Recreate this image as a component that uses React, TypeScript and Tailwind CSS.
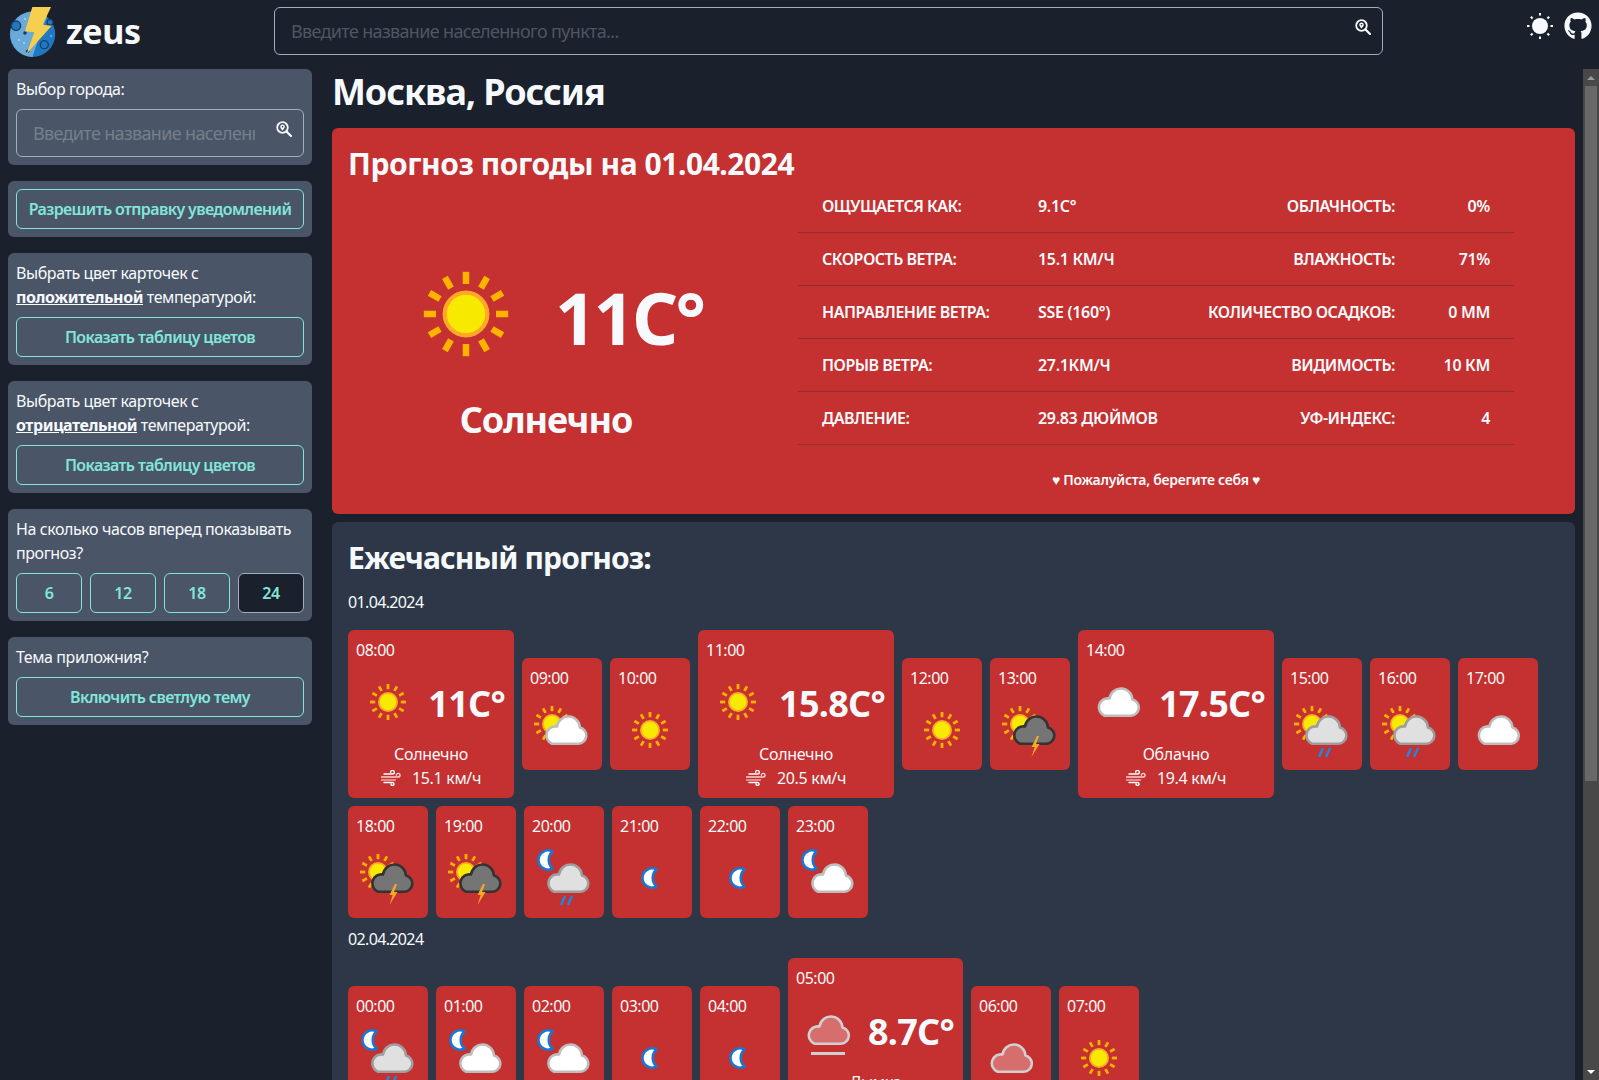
import React from 'react';
import { FaGithub } from 'react-icons/fa';

type IconKind =
  | 'sun'
  | 'cloud'
  | 'partly'
  | 'partlyRain'
  | 'partlyStorm'
  | 'moon'
  | 'moonCloud'
  | 'moonRain'
  | 'pinkCloud'
  | 'fog';

interface Hour {
  time: string;
  icon: IconKind;
  temp?: string;
  text?: string;
  wind?: string;
  width?: string;
}

const CLOUD_PATH = 'M9 28.7H35.5a8.2 8.2 0 0 0 1.4-16.2A11.5 11.5 0 0 0 14 11.5A9 9 0 0 0 9 28.7Z';

function Cloud({ x = 13, fill = '#fff', stroke = '#bdbdbd', fillOpacity = 1 }: { x?: number; fill?: string; stroke?: string; fillOpacity?: number }) {
  return (
    <g transform={`translate(${x} 17)`}>
      <path d={CLOUD_PATH} fill={fill} fillOpacity={fillOpacity} stroke={stroke} strokeWidth="2.6" strokeLinejoin="round" />
    </g>
  );
}

function Sun({ cx = 32, cy = 32 }: { cx?: number; cy?: number }) {
  return (
    <g>
      {[0, 30, 60, 90, 120, 150, 180, 210, 240, 270, 300, 330].map((a) => (
        <rect key={a} x={cx - 1.4} y={cy - 18} width="2.8" height="5.2" fill="#ffb300" transform={`rotate(${a} ${cx} ${cy})`} />
      ))}
      <circle cx={cx} cy={cy} r="10" fill="#ffa726" />
      <circle cx={cx} cy={cy} r="8.2" fill="#f7ea00" />
    </g>
  );
}

function Moon({ dx = 0, dy = 0 }: { dx?: number; dy?: number }) {
  return (
    <path
      transform={`translate(${dx} ${dy})`}
      d="M36.5 23.5A9.6 9.6 0 1 0 36.5 40.5A11.5 11.5 0 0 1 36.5 23.5Z"
      fill="#fff"
      stroke="#1976d2"
      strokeWidth="2.6"
      strokeLinejoin="round"
    />
  );
}

function Rain() {
  return (
    <g stroke="#1e88e5" strokeWidth="2.4">
      <path d="M33 50l-4 9" />
      <path d="M40 50l-4 9" />
    </g>
  );
}

function WeatherIcon({ kind, className = 'h-16 w-16 shrink-0' }: { kind: IconKind; className?: string }) {
  return (
    <svg viewBox="0 0 64 64" className={className}>
      {kind === 'sun' && <Sun />}
      {kind === 'cloud' && <Cloud x={9.5} />}
      {kind === 'partly' && (
        <>
          <Sun cx={22} cy={26} />
          <Cloud />
        </>
      )}
      {kind === 'partlyRain' && (
        <>
          <Sun cx={22} cy={26} />
          <Cloud fill="#e0e0e0" stroke="#9e9e9e" />
          <Rain />
        </>
      )}
      {kind === 'partlyStorm' && (
        <>
          <Sun cx={22} cy={26} />
          <Cloud fill="#757575" stroke="#333" />
          <path d="M39 38l-5.5 11h3.2L33.5 59 41.5 46h-3.4L41 38Z" fill="#f9a825" />
        </>
      )}
      {kind === 'moon' && <Moon />}
      {kind === 'moonCloud' && (
        <>
          <Moon dx={-16} dy={-18} />
          <Cloud />
        </>
      )}
      {kind === 'moonRain' && (
        <>
          <Moon dx={-16} dy={-18} />
          <Cloud fill="#e0e0e0" stroke="#9e9e9e" />
          <Rain />
        </>
      )}
      {kind === 'pinkCloud' && <Cloud x={9.5} fill="#fff" fillOpacity={0.3} stroke="#d0d0d0" />}
      {kind === 'fog' && (
        <>
          <Cloud x={9.5} fill="#fff" fillOpacity={0.3} stroke="#d0d0d0" />
          <rect x="15" y="54" width="34" height="3" fill="#d0d0d0" />
        </>
      )}
    </svg>
  );
}

function WindIcon() {
  return (
    <svg viewBox="0 0 21 16" className="h-4 w-[21px] shrink-0" fill="none" strokeWidth="1.4">
      <path d="M3 4h8.5a1.8 1.8 0 1 0-1.8-1.8" stroke="#fff" strokeLinecap="round" />
      <path d="M0 7h17.2a1.8 1.8 0 1 0-1.8-1.8" stroke="#f8d4d4" strokeLinecap="round" />
      <path d="M0 10h15" stroke="#f3b4b4" />
      <path d="M3 12.5h8.5a1.5 1.5 0 1 1-1.5 1.5" stroke="#fff" strokeLinecap="round" />
    </svg>
  );
}

function PinSearch({ className }: { className: string }) {
  return (
    <svg viewBox="0 0 16 16" className={className}>
      <circle cx="6.5" cy="6.5" r="5.3" fill="none" stroke="#f7fafc" strokeWidth="1.8" />
      <path d="M10.5 10.5L15 15" stroke="#f7fafc" strokeWidth="2.2" strokeLinecap="round" />
      <path d="M6.5 3.5a2.3 2.3 0 0 0-2.3 2.3c0 1.5 2.3 3.8 2.3 3.8s2.3-2.3 2.3-3.8a2.3 2.3 0 0 0-2.3-2.3Z" fill="#f7fafc" />
      <circle cx="6.5" cy="5.8" r="0.8" fill="#1a202c" />
    </svg>
  );
}

function Logo() {
  return (
    <svg viewBox="0 0 48 50" className="h-[50px] w-[48px]">
      <circle cx="23.5" cy="27.3" r="22.7" fill="#1f78c1" />
      <path d="M38 9.5A22.7 22.7 0 1 0 23.5 50L30 30Z" fill="#6aa9d8" />
      <circle cx="7" cy="18.7" r="4.7" fill="#1f78c1" stroke="#1d3c5e" strokeWidth="1.4" />
      <circle cx="41" cy="15.3" r="3" fill="#1f78c1" stroke="#1d3c5e" strokeWidth="1.2" />
      <circle cx="35.3" cy="37.7" r="4" fill="#1f78c1" stroke="#1d3c5e" strokeWidth="1.3" />
      <circle cx="16" cy="26" r="1.8" fill="#1d3c5e" />
      <circle cx="18.7" cy="44.3" r="1.8" fill="#1d3c5e" />
      <circle cx="16" cy="12" r="0.7" fill="#fff" />
      <circle cx="10" cy="33" r="0.7" fill="#fff" />
      <circle cx="15" cy="36" r="0.7" fill="#fff" />
      <circle cx="42" cy="29" r="0.7" fill="#fff" />
      <path d="M23.3 0L42 0 33.7 17.7 42.7 18.7 17.7 46.7 25.3 25.3 16 24.3Z" fill="#f6cf4f" />
    </svg>
  );
}

function HeaderSun() {
  return (
    <svg viewBox="0 0 26 26" className="h-[26px] w-[26px]" fill="#f7fafc">
      <circle cx="13" cy="13" r="8" />
      {[0, 45, 90, 135, 180, 225, 270, 315].map((a) => (
        <rect key={a} x="12" y="0" width="2" height="2.5" transform={`rotate(${a} 13 13)`} />
      ))}
    </svg>
  );
}

function Panel({ children }: { children: React.ReactNode }) {
  return <div className="rounded-md bg-[#4a5568] p-2">{children}</div>;
}

function TealButton({ label }: { label: string }) {
  return (
    <button className="h-10 w-full rounded-md border border-[#81e6d9] font-semibold tracking-[-0.038em] text-[#81e6d9]">{label}</button>
  );
}

function Sidebar() {
  return (
    <aside className="flex w-[304px] shrink-0 flex-col gap-4">
      <Panel>
        <label className="mb-2 block h-6">Выбор города:</label>
        <div className="relative">
          <input
            placeholder="Введите название населенного пункта..."
            className="h-12 w-full rounded-md border border-[#a0aec0] bg-transparent pl-4 pr-12 text-lg tracking-[-0.037em] outline-none placeholder:text-[#767e8b]"
          />
          <PinSearch className="absolute right-3 top-3 h-4 w-4" />
        </div>
      </Panel>
      <Panel>
        <TealButton label="Разрешить отправку уведомлений" />
      </Panel>
      <Panel>
        <p className="mb-2">
          Выбрать цвет карточек с <b className="font-bold underline">положительной</b> температурой:
        </p>
        <TealButton label="Показать таблицу цветов" />
      </Panel>
      <Panel>
        <p className="mb-2">
          Выбрать цвет карточек с <b className="font-bold underline">отрицательной</b> температурой:
        </p>
        <TealButton label="Показать таблицу цветов" />
      </Panel>
      <Panel>
        <p className="mb-2">На сколько часов вперед показывать прогноз?</p>
        <div className="flex gap-2">
          {['6', '12', '18'].map((h) => (
            <button key={h} className="h-10 flex-1 rounded-md border border-[#81e6d9] font-semibold text-[#81e6d9]">
              {h}
            </button>
          ))}
          <button className="h-10 flex-1 rounded-md border border-[#a0aec0] bg-[#1a202c] font-semibold text-[#81e6d9]">
            24
          </button>
        </div>
      </Panel>
      <Panel>
        <p className="mb-2">Тема приложния?</p>
        <TealButton label="Включить светлую тему" />
      </Panel>
    </aside>
  );
}

const STATS = [
  ['Ощущается как:', '9.1C°', 'Облачность:', '0%'],
  ['Скорость ветра:', '15.1 км/ч', 'Влажность:', '71%'],
  ['Направление ветра:', 'SSE (160°)', 'Количество осадков:', '0 мм'],
  ['Порыв ветра:', '27.1км/ч', 'Видимость:', '10 км'],
  ['Давление:', '29.83 дюймов', 'УФ-индекс:', '4'],
];

function CurrentWeather() {
  return (
    <section className="rounded-md bg-[#c53030] p-4 pb-6">
      <h2 className="text-[30px] font-bold leading-10 tracking-[-0.015em]">Прогноз погоды на 01.04.2024</h2>
      <div className="flex">
        <div className="mr-[54px] flex w-[396px] shrink-0 flex-col items-center pt-[55px]">
          <div className="flex items-center self-start pl-[43px]">
            <WeatherIcon kind="sun" className="h-[150px] w-[150px]" />
            <span className="ml-[14px] mt-[6px] text-[72px] font-bold leading-none tracking-[-0.037em]">11C°</span>
          </div>
          <span className="mt-[11px] text-4xl font-bold tracking-[-0.03em]">Солнечно</span>
        </div>
        <div className="-mt-1 w-[716px]">
          {STATS.map(([a, b, c, d]) => (
            <div key={a} className="flex h-[53px] items-center border-b border-[#8f2f2f] px-6 text-base font-semibold uppercase tracking-[-0.03em]">
              <span className="w-[216px]">{a}</span>
              <span className="flex-1 tracking-[-0.02em]">{b}</span>
              <span>{c}</span>
              <span className="w-[95px] text-right tracking-[-0.02em]">{d}</span>
            </div>
          ))}
          <p className="mt-[25px] text-center text-sm font-semibold tracking-[-0.02em]">♥ Пожалуйста, берегите себя ♥</p>
        </div>
      </div>
    </section>
  );
}

function HourCard({ hour }: { hour: Hour }) {
  if (!hour.temp) {
    return (
      <div className="h-28 w-20 rounded-md bg-[#c53030] p-2">
        <div className="mb-2 h-6 tracking-[-0.03em]">{hour.time}</div>
        <WeatherIcon kind={hour.icon} />
      </div>
    );
  }
  return (
    <div className={`h-[168px] rounded-md bg-[#c53030] p-2 ${hour.width}`}>
      <div className="mb-2 h-6 tracking-[-0.03em]">{hour.time}</div>
      <div className="flex items-center justify-between">
        <WeatherIcon kind={hour.icon} />
        <span className="mr-px mt-1 whitespace-nowrap text-4xl font-bold tracking-[-0.02em]">{hour.temp}</span>
      </div>
      <div className="mt-2 text-center tracking-[-0.02em]">{hour.text}</div>
      <div className="flex items-center justify-center gap-2.5 tracking-[-0.02em]">
        <WindIcon />
        {hour.wind}
      </div>
    </div>
  );
}

const DAY_ONE: Hour[] = [
  { time: '08:00', icon: 'sun', temp: '11C°', text: 'Солнечно', wind: '15.1 км/ч', width: 'w-[166px]' },
  { time: '09:00', icon: 'partly' },
  { time: '10:00', icon: 'sun' },
  { time: '11:00', icon: 'sun', temp: '15.8C°', text: 'Солнечно', wind: '20.5 км/ч', width: 'w-[196px]' },
  { time: '12:00', icon: 'sun' },
  { time: '13:00', icon: 'partlyStorm' },
  { time: '14:00', icon: 'cloud', temp: '17.5C°', text: 'Облачно', wind: '19.4 км/ч', width: 'w-[196px]' },
  { time: '15:00', icon: 'partlyRain' },
  { time: '16:00', icon: 'partlyRain' },
  { time: '17:00', icon: 'cloud' },
  { time: '18:00', icon: 'partlyStorm' },
  { time: '19:00', icon: 'partlyStorm' },
  { time: '20:00', icon: 'moonRain' },
  { time: '21:00', icon: 'moon' },
  { time: '22:00', icon: 'moon' },
  { time: '23:00', icon: 'moonCloud' },
];

const DAY_TWO: Hour[] = [
  { time: '00:00', icon: 'moonRain' },
  { time: '01:00', icon: 'moonCloud' },
  { time: '02:00', icon: 'moonCloud' },
  { time: '03:00', icon: 'moon' },
  { time: '04:00', icon: 'moon' },
  { time: '05:00', icon: 'fog', temp: '8.7C°', text: 'Дымка', wind: '11.2 км/ч', width: 'w-[175px]' },
  { time: '06:00', icon: 'pinkCloud' },
  { time: '07:00', icon: 'sun' },
];

function HourlyForecast() {
  return (
    <section className="mt-2 rounded-md bg-[#2d3748] p-4">
      <h2 className="text-[30px] font-bold leading-10 tracking-[-0.03em]">Ежечасный прогноз:</h2>
      <div className="mt-3 h-6 tracking-[-0.04em]">01.04.2024</div>
      <div className="mt-4 flex flex-wrap items-center gap-2">
        {DAY_ONE.map((h) => (
          <HourCard key={h.time} hour={h} />
        ))}
      </div>
      <div className="mt-[9px] h-6 tracking-[-0.04em]">02.04.2024</div>
      <div className="mt-[7px] flex flex-wrap items-center gap-2">
        {DAY_TWO.map((h) => (
          <HourCard key={h.time} hour={h} />
        ))}
      </div>
    </section>
  );
}

function ScrollBar() {
  return (
    <div className="flex w-4 shrink-0 flex-col bg-[#484848]">
      <div className="flex h-[17px] items-center justify-center">
        <div className="h-0 w-0 border-x-4 border-b-4 border-x-transparent border-b-[#9a9a9a]" />
      </div>
      <div className="mx-0.5 h-[695px] bg-[#686868]" />
      <div className="mt-auto flex h-[17px] items-center justify-center">
        <div className="h-0 w-0 border-x-4 border-t-4 border-x-transparent border-t-white" />
      </div>
    </div>
  );
}

export default function App() {
  return (
    <div className="flex h-screen flex-col overflow-hidden bg-[#1a202c] font-['Noto_Sans',sans-serif] tracking-[-0.026em] text-[#f7fafc]">
      <header className="flex h-[69px] shrink-0 items-start">
        <div className="flex w-[274px] shrink-0 items-center pl-[9px] pt-[6px]">
          <Logo />
          <span className="ml-[9px] text-[34px] font-bold">zeus</span>
        </div>
        <div className="relative mt-[7px] w-[1109px]">
          <input
            placeholder="Введите название населенного пункта..."
            className="h-12 w-full rounded-md border border-[#a0aec0] bg-transparent pl-4 pr-12 text-lg tracking-[-0.037em] outline-none placeholder:text-[#4f5663]"
          />
          <PinSearch className="absolute right-3 top-3 h-4 w-4" />
        </div>
        <div className="ml-auto flex items-center gap-[11px] pr-[7px] pt-3">
          <HeaderSun />
          <FaGithub className="h-7 w-7" />
        </div>
      </header>
      <div className="flex min-h-0 flex-1">
        <div className="w-[320px] shrink-0 pl-2">
          <Sidebar />
        </div>
        <main className="min-w-0 flex-1 overflow-hidden pl-3 pr-2">
          <h1 className="mb-[13px] text-4xl font-bold leading-[46px] tracking-[-0.03em]">Москва, Россия</h1>
          <CurrentWeather />
          <HourlyForecast />
        </main>
        <ScrollBar />
      </div>
    </div>
  );
}
